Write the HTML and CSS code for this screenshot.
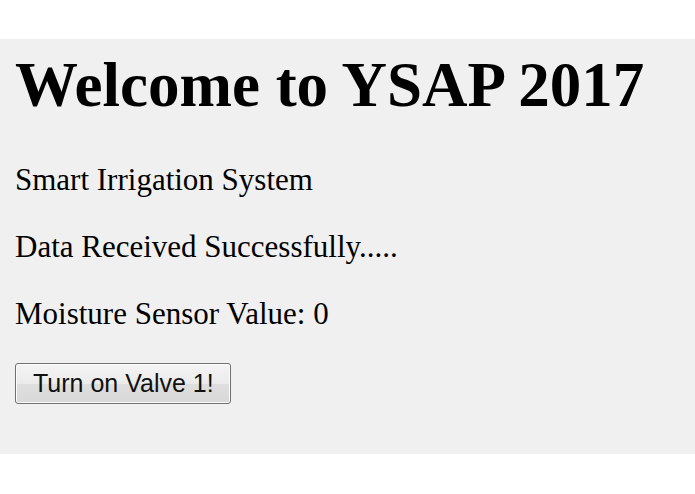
FILE: index.html
```html
<!DOCTYPE html>
<html lang="en">
  <head>
    <meta charset="UTF-8" />
    <meta name="viewport" content="width=device-width, initial-scale=1.0" />
    <title>YSAP 2017</title>
    <link rel="stylesheet" href="styles.css">
  </head>
  <body>
    <div class="page">
      <h1>Welcome to YSAP 2017</h1>
      <p>Smart Irrigation System</p>
      <p>Data Received Successfully.....</p>
      <p>Moisture Sensor Value: 0</p>
      <form class="valve">
        <button type="button" class="btn">Turn on Valve 1!</button>
      </form>
    </div>
  </body>
</html>
```

FILE: styles.css
```css
* {
  margin: 0;
  padding: 0;
}
body {
  background: #fff;
  font-family: "Liberation Serif", "Times New Roman", serif;
  font-size: 31px;
  color: #000;
}
.page {
  margin-top: 39px;
  padding: 10px 15px 50px;
  background: #f0f0f0;
}
h1 {
  font-size: 63px;
  font-weight: 700;
  margin-bottom: 40px;
}
p {
  margin-bottom: 31px;
}
.valve {
  margin-top: 3px;
  display: flex;
}
.btn {
  height: 41px;
  padding: 0 16px 0 17px;
  font-family: "Liberation Sans", Arial, sans-serif;
  font-size: 25px;
  color: #111;
  border: 1px solid #707070;
  border-radius: 3px;
  background: linear-gradient(#f4f4f4, #ebebeb 50%, #dfdfdf 51%, #d8d8d8);
  box-shadow: inset 0 0 0 1px #fcfcfc;
}
```
